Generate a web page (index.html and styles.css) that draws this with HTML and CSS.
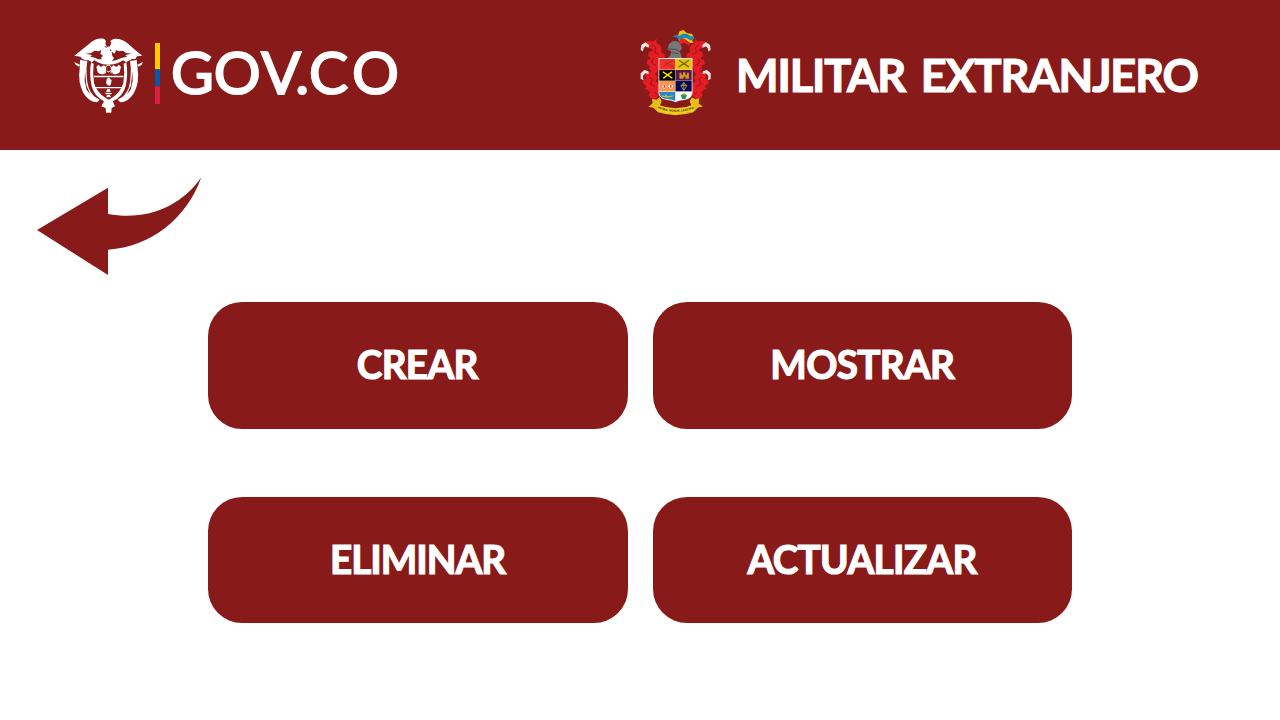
FILE: index.html
```html
<!DOCTYPE html>
<html lang="es">
<head>
<meta charset="utf-8">
<title>Militar extranjero</title>
<link rel="stylesheet" href="styles.css">
</head>
<body>
<header class="header">
  <svg class="gov-logo" viewBox="0 0 1050 300" role="img" aria-label="GOV.CO">
    <g fill="#fff">
      <path d="M43 92 Q68 73 86 58 Q106 37 132 41 L138 48 L136 56 L141 66 L150 64 L154 53 L151 48 L160 42 Q184 39 206 58 Q224 75 247 92 L231 94 L226 102 L216 102 L206 107 L198 112 L190 106 L174 114 Q162 119 146 119 Q128 119 116 113 L103 106 L96 112 L86 106 L75 105 L66 101 L61 95Z"/>
      <path d="M60 104 Q74 108 82 107 Q78 130 80 150 Q81 194 102 214 L119 224 L111 232 Q88 232 70 204 Q53 171 59 132Z"/>
      <path d="M230 104 Q218 108 210 107 Q214 130 212 150 Q211 194 190 214 L173 224 L181 232 Q204 232 222 204 Q239 171 233 132Z"/>
      <path d="M42 111 L60 119 L57 125 L47 119Z M249 111 L232 119 L235 125 L245 119Z"/>
      <path d="M93 112 L101 116 Q97 145 102 174 Q110 202 136 218 L146 224 L156 218 Q182 202 190 174 Q195 145 191 116 L199 112 Q205 148 197 184 Q188 216 158 229 L165 244 L155 249 L154 263 L138 263 L137 249 L124 244 L132 229 Q103 214 95 184 Q87 148 93 112Z"/>
      <path d="M102 152H190V157H102Z M105 186H187V190H105Z"/>
      <path d="M109 125 L116 119 L122 126 L132 121 L139 128 L134 146 Q121 151 113 142Z M183 125 L176 119 L170 126 L160 121 L153 128 L158 146 Q171 151 179 142Z"/>
      <path d="M140 163 L146 157 L151 163 L155 165 L153 177 L149 182 L143 181 L138 174Z M141 193 L149 192 L152 200 L139 201Z M134 203 L157 204 L153 208 L139 208Z M140 211 L149 209 L153 216 L139 217Z"/>
    </g>
    <path fill="none" stroke="#fff" stroke-width="3" d="M137 145 Q133 122 145 120 Q158 122 153 145 M140 137 Q146 145 152 137"/>
    <g fill="#881b1a">
      <path d="M77 86 L94 84 L103 77 L116 79 L124 75 L121 86 L129 92 L123 98 L126 103 L114 103 L105 98 L91 95 L96 90Z"/>
      <path d="M215 86 L198 84 L189 77 L176 79 L168 75 L164 86 L155 80 L157 93 L162 99 L156 108 L170 105 L184 99 L201 95 L196 90Z"/>
      <path d="M132 62 L141 66 L138 69Z M149 72 L155 77 L150 78Z"/>
      <path d="M75 138 L79 181 L91 208 L80 194 L74 168Z M217 138 L213 181 L201 208 L212 194 L218 168Z"/>
    </g>
    <path fill="#fecb00" d="M285 54h15v79h-15z"/>
    <path fill="#0957a5" d="M285 133h15v51h-15z"/>
    <path fill="#d3213f" d="M285 184h15v53h-15z"/>
    <text class="gov-name" y="208" x="333 461 604 706 747 876">GOV.CO</text>
  </svg>
  <svg class="crest" viewBox="0 0 270 330" role="img" aria-label="Escudo militar">
    <g id="mantle">
      <path fill="#e51c23" d="M44 67 L58 62 L70 65 L80 56 L79 69 L90 75 L95 84 L93 97 L103 102 L105 114 L88 116 L86 126 L92 137 L83 142 L84 154 L75 162 L83 171 L77 183 L87 191 L93 211 L88 226 L76 236 L63 235 L55 226 L61 218 L53 209 L43 207 L50 199 L38 188 L40 178 L50 176 L44 166 L53 156 L66 154 L57 146 L61 139 L50 132 L52 120 L63 116 L55 108 L56 96 L69 92 L61 83 L48 82Z"/>
      <path fill="none" stroke="#881b1a" stroke-width="3" d="M66 73 L78 83 L74 96 L86 103 M70 115 L65 129 L78 136 M58 171 L68 178 L61 190 L75 201 M73 216 L82 224"/>
      <path fill="#f4e7e4" d="M32 90 L34 75 L46 67 L57 75 L56 83 L46 79 L41 84 L39 94Z M32 177 L32 160 L43 150 L55 154 L56 162 L46 160 L39 167 L40 180Z"/>
    </g>
    <use href="#mantle" transform="matrix(-1 0 0 1 274 0)"/>
    <path fill="#f2c600" d="M143 48 L149 34 L160 30 L170 39 L186 42 L192 54 L186 62 L192 68 L180 69 L164 58 L152 58 L148 67Z"/>
    <path fill="#1689bd" d="M128 50 L138 44 L149 47 L158 41 L172 42 L182 49 L191 49 L190 59 L180 61 L171 55 L162 54 L150 60 L138 52Z"/>
    <path fill="#e3232c" d="M145 65 L154 55 L165 58 L180 69 L177 77 L164 68 L151 72Z"/>
    <path fill="#777879" d="M112 89 L117 72 L129 63 L143 64 L152 74 L156 85 L149 94 L154 108 L158 117 L110 117 L122 105 L123 93Z"/>
    <path stroke="#373737" stroke-width="2" fill="none" d="M114 87 L137 88 L150 96 M124 98 L145 101"/>
    <g transform="matrix(1.186 0 0 1 -16.5 1)">
      <path fill="#eee" d="M86 113H172V219Q169 237 151 239Q137 240 129 246Q121 240 107 239Q89 237 86 219Z"/>
      <path fill="#f62f28" d="M88 116h40v32H88z"/>
      <path fill="#e8c400" d="M129 116h41v32h-41z"/>
      <path fill="#050505" d="M88 149h40v32H88z"/>
      <path fill="#5d1550" d="M129 149h41v32h-41z"/>
      <path fill="#ff9448" d="M88 182h40v31H88z"/>
      <path fill="#080858" d="M129 182h41v31h-41z"/>
      <path fill="#2188cb" d="M88 215h40v26Q118 236 107 236Q91 235 88 219z"/>
      <path fill="#fff" d="M131 215h38q-1 20-18 21-12 1-20 5z"/>
      <g fill="none" stroke-width="3">
        <path stroke="#a5331d" d="M99 138 L122 120 M102 124 L122 140"/>
        <path stroke="#6d5100" d="M137 140 L163 120 M138 120 L163 140"/>
        <path stroke="#ffe400" stroke-width="4" d="M98 174 L120 154 M97 154 L121 174"/>
        <path stroke="#cfbb40" stroke-width="2" d="M143 197l7-10 7 10-7 13z M142 195h17 M150 185v26"/>
        <path stroke="#d8bd32" d="M94 226 L108 231 L123 226 M103 223 L112 233"/>
      </g>
      <path fill="#c89a18" d="M139 157h5v6h4v-7h6v7h4v-6h5v18h-9v-6h-5v6h-10z"/>
      <path fill="#fff" d="M101 190 L107 198 L101 206 L95 198Z M117 190 L124 198 L117 206 L110 198Z"/>
      <path fill="#ed3030" d="M99 193h4v9h-4z M115 193h4v9h-4z"/>
      <path fill="#23945a" d="M142 224 L150 220 L158 224 L154 236 L146 236Z"/>
      <path fill="#d0b532" d="M147 220 l4 -3 l4 4 l-4 5z"/>
    </g>
    <path fill="#e7bc17" d="M66 236 L79 239 L89 232 L95 243 L86 268 Q137 288 188 268 L179 243 L186 232 L196 238 L208 235 L206 250 L219 260 L205 262 L190 277 Q137 294 84 277 L70 263 L55 260 L68 250Z"/>
    <path fill="#f2ce20" d="M84 254Q137 275 190 254L193 271Q137 294 81 271Z"/>
    <path id="motto-line" fill="none" d="M76 262Q137 289 200 262"/>
    <text class="motto"><textPath href="#motto-line" startOffset="7" textLength="112" lengthAdjust="spacingAndGlyphs">PATRIA, HONOR, LEALTAD</textPath></text>
  </svg>
  <h1 class="title">MILITAR EXTRANJERO</h1>
</header>
<main class="content">
  <a class="back" href="#" aria-label="Volver">
    <svg class="back-icon" viewBox="0 0 570 360"><path fill="#881b1a" d="M36 195L249 68V147C365 168 467 126 529 37C486 161 376 246 249 254V330Z"/></svg>
  </a>
  <nav class="actions">
    <a class="action" href="#"><span class="label">CREAR</span></a>
    <a class="action" href="#"><span class="label">MOSTRAR</span></a>
    <a class="action" href="#"><span class="label label-tight">ELIMINAR</span></a>
    <a class="action" href="#"><span class="label">ACTUALIZAR</span></a>
  </nav>
</main>
</body>
</html>
```
FILE: styles.css
```css
* { box-sizing: border-box; }
body { margin: 0; background: #fff; font-family: Lato, "Noto Sans", sans-serif; }
.header { display: flex; align-items: center; height: 150px; padding-left: 60px; background: #881b1a; }
.gov-logo { flex: none; width: 350px; height: 100px; }
.gov-name { font: 400 176px Lato, sans-serif; fill: #fff; stroke: #fff; stroke-width: 6px; }
.crest { flex: none; width: 90px; height: 110px; margin-left: 220px; }
.motto { font: 700 9px "Liberation Sans", sans-serif; fill: #2b1c00; }
.title { margin: 0 0 3px 16px; color: #fff; font-size: 46.7px; font-weight: 700; line-height: 58px; letter-spacing: -1.15px; word-spacing: 6px; white-space: nowrap; transform: scaleX(0.965); transform-origin: left; -webkit-text-stroke: 1.2px #fff; }
.content { height: 570px; padding: 15px 0 0 25px; }
.back { display: block; width: 190px; height: 120px; }
.back-icon { display: block; width: 190px; height: 120px; }
.actions { display: grid; grid-template-columns: 419.5px 419.5px; grid-auto-rows: 126.6px; column-gap: 25px; row-gap: 68.2px; margin: 17px 0 0 183px; }
.action { display: flex; align-items: center; justify-content: center; padding-bottom: 2px; border-radius: 34px; background: #881b1a; color: #fff; font-size: 40.5px; font-weight: 700; line-height: 50px; text-decoration: none; }
.label { display: block; letter-spacing: -0.75px; transform: scaleX(0.955); -webkit-text-stroke: 1.2px #fff; }
.label-tight { letter-spacing: -1.1px; }
```
